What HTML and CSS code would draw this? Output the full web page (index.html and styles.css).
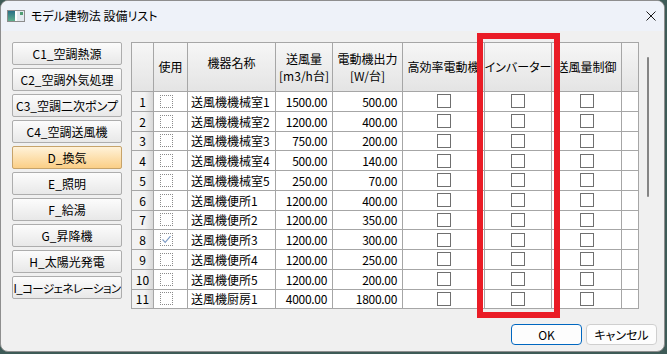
FILE: index.html
```html
<!DOCTYPE html>
<html lang="ja">
<head>
<meta charset="utf-8">
<title>モデル建物法 設備リスト</title>
<link rel="stylesheet" href="styles.css">
</head>
<body>
<div class="window">
  <div class="titlebar">
    <svg class="appicon" width="18" height="12" viewBox="0 0 18 12">
      <defs>
        <linearGradient id="tg" x1="0" y1="0" x2="0" y2="1">
          <stop offset="0" stop-color="#2a6f86"/>
          <stop offset="1" stop-color="#5fae8c"/>
        </linearGradient>
      </defs>
      <rect x="0.5" y="0.5" width="17" height="11" fill="#e4eaef" stroke="#8c8c8c"/>
      <rect x="1" y="1" width="7" height="10" fill="url(#tg)"/>
      <rect x="8" y="1" width="2" height="10" fill="#ffffff"/>
      <rect x="13" y="2" width="3" height="3" fill="#4f9d72"/>
    </svg>
    <span class="title">モデル建物法 設備リスト</span>
    <svg class="close" width="10" height="10" viewBox="0 0 10 10">
      <path d="M0.5 0.5 L9.5 9.5 M9.5 0.5 L0.5 9.5" stroke="#1a1a1a" stroke-width="1" fill="none"/>
    </svg>
  </div>
  <div class="content">
    <div class="cats">
      <button class="cat">C1_空調熱源</button>
      <button class="cat">C2_空調外気処理</button>
      <button class="cat">C3_空調二次ポンプ</button>
      <button class="cat">C4_空調送風機</button>
      <button class="cat active">D_換気</button>
      <button class="cat">E_照明</button>
      <button class="cat">F_給湯</button>
      <button class="cat">G_昇降機</button>
      <button class="cat">H_太陽光発電</button>
      <button class="cat tight">I_コージェネレーション</button>
    </div>
    <div class="main">
      <div class="gridwrap">
        <div class="grid">
          <div class="hd corner"></div>
          <div class="hd">使用</div>
          <div class="hd name-hd">機器名称</div>
          <div class="hd two">送風量<br>[m3/h台]</div>
          <div class="hd two">電動機出力<br>[W/台]</div>
          <div class="hd">高効率電動機</div>
          <div class="hd">インバーター</div>
          <div class="hd">送風量制御</div>
          <div class="hd"></div>

          <div class="rh">1</div><div class="c use"><span class="dot"></span></div><div class="c name">送風機機械室1</div><div class="c num">1500.00</div><div class="c num">500.00</div><div class="c box"><span class="chk"></span></div><div class="c box"><span class="chk"></span></div><div class="c box"><span class="chk"></span></div><div class="c"></div>
          <div class="rh">2</div><div class="c use"><span class="dot"></span></div><div class="c name">送風機機械室2</div><div class="c num">1200.00</div><div class="c num">400.00</div><div class="c box"><span class="chk"></span></div><div class="c box"><span class="chk"></span></div><div class="c box"><span class="chk"></span></div><div class="c"></div>
          <div class="rh">3</div><div class="c use"><span class="dot"></span></div><div class="c name">送風機機械室3</div><div class="c num">750.00</div><div class="c num">200.00</div><div class="c box"><span class="chk"></span></div><div class="c box"><span class="chk"></span></div><div class="c box"><span class="chk"></span></div><div class="c"></div>
          <div class="rh">4</div><div class="c use"><span class="dot"></span></div><div class="c name">送風機機械室4</div><div class="c num">500.00</div><div class="c num">140.00</div><div class="c box"><span class="chk"></span></div><div class="c box"><span class="chk"></span></div><div class="c box"><span class="chk"></span></div><div class="c"></div>
          <div class="rh">5</div><div class="c use"><span class="dot"></span></div><div class="c name">送風機機械室5</div><div class="c num">250.00</div><div class="c num">70.00</div><div class="c box"><span class="chk"></span></div><div class="c box"><span class="chk"></span></div><div class="c box"><span class="chk"></span></div><div class="c"></div>
          <div class="rh">6</div><div class="c use"><span class="dot"></span></div><div class="c name">送風機便所1</div><div class="c num">1200.00</div><div class="c num">400.00</div><div class="c box"><span class="chk"></span></div><div class="c box"><span class="chk"></span></div><div class="c box"><span class="chk"></span></div><div class="c"></div>
          <div class="rh">7</div><div class="c use"><span class="dot"></span></div><div class="c name">送風機便所2</div><div class="c num">1200.00</div><div class="c num">350.00</div><div class="c box"><span class="chk"></span></div><div class="c box"><span class="chk"></span></div><div class="c box"><span class="chk"></span></div><div class="c"></div>
          <div class="rh">8</div><div class="c use"><span class="dot"><svg class="tick" width="11" height="11" viewBox="0 0 11 11"><path d="M1.5 5.5 L4.2 8.3 L9.5 2.2" stroke="#7f9cc4" stroke-width="1.2" fill="none"/></svg></span></div><div class="c name">送風機便所3</div><div class="c num">1200.00</div><div class="c num">300.00</div><div class="c box"><span class="chk"></span></div><div class="c box"><span class="chk"></span></div><div class="c box"><span class="chk"></span></div><div class="c"></div>
          <div class="rh">9</div><div class="c use"><span class="dot"></span></div><div class="c name">送風機便所4</div><div class="c num">1200.00</div><div class="c num">250.00</div><div class="c box"><span class="chk"></span></div><div class="c box"><span class="chk"></span></div><div class="c box"><span class="chk"></span></div><div class="c"></div>
          <div class="rh">10</div><div class="c use"><span class="dot"></span></div><div class="c name">送風機便所5</div><div class="c num">1200.00</div><div class="c num">200.00</div><div class="c box"><span class="chk"></span></div><div class="c box"><span class="chk"></span></div><div class="c box"><span class="chk"></span></div><div class="c"></div>
          <div class="rh">11</div><div class="c use"><span class="dot"></span></div><div class="c name">送風機厨房1</div><div class="c num">4000.00</div><div class="c num">1800.00</div><div class="c box"><span class="chk"></span></div><div class="c box"><span class="chk"></span></div><div class="c box"><span class="chk"></span></div><div class="c"></div>
        </div>
        <div class="vscroll"><div class="thumb"></div></div>
      </div>
      <div class="actions">
        <button class="btn ok">OK</button>
        <button class="btn cancel">キャンセル</button>
      </div>
    </div>
  </div>
  <div class="highlight"></div>
</div>
</body>
</html>
```

FILE: styles.css
```css
* { box-sizing: border-box; }
html, body { margin: 0; padding: 0; }
body {
  width: 667px;
  height: 354px;
  overflow: hidden;
  background: #3e5b57;
  font-family: "Noto Sans CJK JP", "Noto Sans", sans-serif;
  font-size: 12px;
  color: #000;
}
.window {
  position: relative;
  width: 665px;
  height: 352px;
  background: #f0f0f0;
  border: 1px solid #8e8e8e;
  border-radius: 8px;
  overflow: hidden;
  display: flex;
  flex-direction: column;
}
.titlebar {
  flex: none;
  height: 30px;
  background: #eef2f9;
  display: flex;
  align-items: center;
  padding-left: 6px;
}
.appicon { margin-right: 6px; flex: none; }
.title {
  font-size: 12px;
  font-feature-settings: "palt";
  line-height: 14px;
}
.close { margin-left: auto; margin-right: 8px; }

.content {
  flex: 1;
  display: flex;
  padding: 11px 0 0 11px;
}
.cats {
  flex: none;
  width: 110px;
  display: flex;
  flex-direction: column;
  gap: 3px;
}
.cat {
  height: 23px;
  padding: 0;
  border: 1px solid #adadad;
  border-radius: 2px;
  background: linear-gradient(#fcfcfc, #e8e8e8);
  font-family: inherit;
  font-size: 12px;
  font-feature-settings: "palt";
  color: #000;
  white-space: nowrap;
  line-height: 14px;
  overflow: hidden;
}
.cat.tight {
  font-size: 11.5px;
  letter-spacing: -0.6px;
}
.cat.active {
  background: linear-gradient(#fff2d9, #fbcf86);
  border-color: #c6a36a;
}

.main {
  flex: 1;
  margin-left: 9px;
  padding-right: 16px;
  display: flex;
  flex-direction: column;
}
.gridwrap { display: flex; }
.grid {
  display: grid;
  grid-template-columns: 22px 34px 88px 57px 70px 82px 67px 70px 17px;
  grid-template-rows: 49px repeat(11, 19.75px);
  border-left: 1px solid #a6a6a6;
  border-top: 1px solid #a6a6a6;
  font-feature-settings: "palt";
}
.grid > div {
  border-right: 1px solid #a6a6a6;
  border-bottom: 1px solid #a6a6a6;
  display: flex;
  align-items: center;
  overflow: hidden;
  white-space: nowrap;
}
.hd {
  background: linear-gradient(#f6f6f6, #e4e4e4);
  justify-content: center;
  text-align: center;
  line-height: 14px;
}
.hd.two { line-height: 17.5px; }
.hd.name-hd { padding-bottom: 8px; }
.rh {
  background: linear-gradient(to right, #f3f3f3 60%, #d9d9d9);
  justify-content: center;
}
.c { background: #fff; }
.use { padding-left: 6px; }
.dot {
  width: 13px;
  height: 13px;
  border: 1px dotted #8a8a8a;
  display: flex;
  align-items: center;
  justify-content: center;
}
.name { padding-left: 3px; }
.num {
  justify-content: flex-end;
  padding-right: 5px;
  letter-spacing: -0.3px;
}
.box { justify-content: center; }
.chk {
  width: 14px;
  height: 14px;
  border: 1px solid #6f6f6f;
  background: #fff;
}
.vscroll {
  width: 18px;
  padding-left: 8px;
}
.thumb {
  margin-top: 15px;
  width: 2px;
  height: 140px;
  border-radius: 1px;
  background: #858585;
}

.actions {
  margin-top: 15px;
  display: flex;
  justify-content: flex-end;
  gap: 4px;
}
.btn {
  width: 71px;
  height: 21px;
  padding: 0;
  border-radius: 4px;
  font-family: inherit;
  font-size: 12px;
  font-feature-settings: "palt";
  color: #000;
  line-height: 14px;
  background: #fdfdfd;
}
.ok { border: 1px solid #0067c0; }
.cancel { border: 1px solid #cfcfcf; }

.highlight {
  position: absolute;
  left: 476px;
  top: 32px;
  width: 83px;
  height: 285px;
  border: 6px solid #ea1c26;
}
```
